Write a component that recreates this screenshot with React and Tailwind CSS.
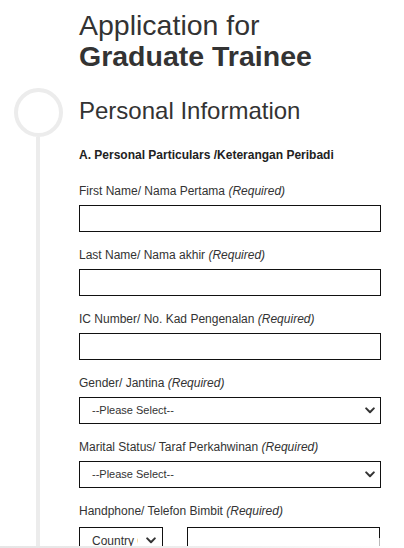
import React from 'react'

function Label({ text }) {
  return (
    <label className="block text-[12px] leading-[14px] text-[#333]">
      {text} <i>(Required)</i>
    </label>
  )
}

function Chevron() {
  return (
    <svg width="10" height="7" viewBox="0 0 10 7" className="shrink-0">
      <path d="M1.2 1.4 L5 5.2 L8.8 1.4" fill="none" stroke="#333" strokeWidth="2" strokeLinecap="round" strokeLinejoin="round" />
    </svg>
  )
}

function TextField({ label, mt = 'mt-[16px]' }) {
  return (
    <div className={mt}>
      <Label text={label} />
      <div className="mt-[7px] h-[27px] border border-[#111] bg-white" />
    </div>
  )
}

function SelectField({ label }) {
  return (
    <div className="mt-[16px]">
      <Label text={label} />
      <div className="mt-[7px] h-[27px] border border-[#111] bg-white flex items-center justify-between pl-[12px] pr-[5px]">
        <span className="text-[11px] text-[#333]">--Please Select--</span>
        <Chevron />
      </div>
    </div>
  )
}

export default function App() {
  return (
    <div className="relative h-[548px] w-[404px] overflow-hidden bg-white" style={{ fontFamily: '"Liberation Sans", Arial, sans-serif' }}>
      <div className="flex h-full">
        <div className="w-[79px] shrink-0 flex flex-col pt-[88px]">
          <div className="ml-[14px] w-[49px] h-[49px] rounded-full border-[4px] border-[#ececec]" />
          <div className="ml-[36px] w-[4px] flex-1 bg-[#ececec]" />
        </div>
        <div className="w-[302px]">
          <h1 className="mt-[10px] text-[28.5px] leading-[31px] text-[#333]">
            Application for
            <br />
            <b>Graduate Trainee</b>
          </h1>
          <h2 className="mt-[25px] text-[24px] leading-[28px] text-[#333]">Personal Information</h2>
          <h3 className="mt-[23px] text-[12px] leading-[14px] font-bold text-[#222]">
            A. Personal Particulars /Keterangan Peribadi
          </h3>
          <TextField label="First Name/ Nama Pertama" mt="mt-[22px]" />
          <TextField label="Last Name/ Nama akhir" />
          <TextField label="IC Number/ No. Kad Pengenalan" />
          <SelectField label="Gender/ Jantina" />
          <SelectField label="Marital Status/ Taraf Perkahwinan" />
          <div className="mt-[16px]">
            <Label text="Handphone/ Telefon Bimbit" />
            <div className="mt-[9px] flex">
              <div className="w-[84px] h-[27px] border border-[#111] bg-white flex items-center justify-between pl-[12px] pr-[6px]">
                <span className="text-[12px] text-[#333] whitespace-nowrap overflow-hidden w-[46px]">Country Code</span>
                <Chevron />
              </div>
              <div className="ml-[24px] w-[193px] h-[27px] border border-[#111] bg-white" />
            </div>
          </div>
        </div>
      </div>
      <div className="absolute bottom-0 left-[190px] right-0 h-[10px] bg-gradient-to-r from-white/0 to-white/80" />
      <div className="absolute bottom-0 left-0 right-0 h-[2px] bg-gradient-to-r from-[#e6e6e6] via-[#eeeeee] to-white" />
    </div>
  )
}
